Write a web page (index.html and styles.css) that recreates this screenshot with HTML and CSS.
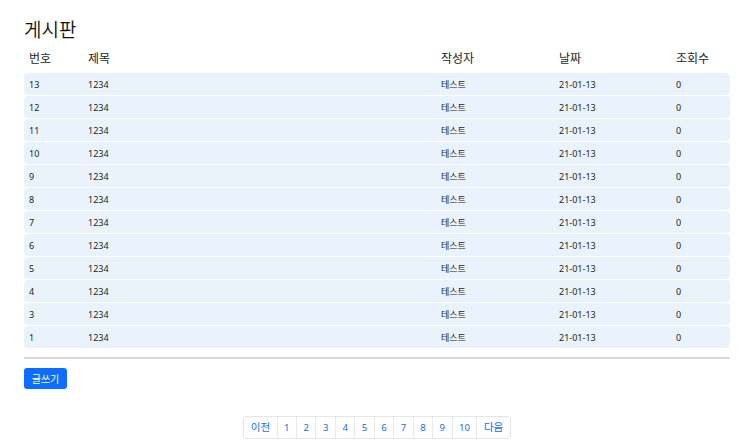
FILE: index.html
```html
<!DOCTYPE html>
<html lang="ko">
<head>
<meta charset="utf-8">
<title>게시판</title>
<link rel="stylesheet" href="styles.css">
</head>
<body>
<div class="page">
  <h1 class="title">게시판</h1>
  <div class="board">
    <div class="row head">
      <div>번호</div><div>제목</div><div>작성자</div><div>날짜</div><div>조회수</div>
    </div>
    <div class="row item"><div>13</div><div>1234</div><div>테스트</div><div>21-01-13</div><div>0</div></div>
    <div class="row item"><div>12</div><div>1234</div><div>테스트</div><div>21-01-13</div><div>0</div></div>
    <div class="row item"><div>11</div><div>1234</div><div>테스트</div><div>21-01-13</div><div>0</div></div>
    <div class="row item"><div>10</div><div>1234</div><div>테스트</div><div>21-01-13</div><div>0</div></div>
    <div class="row item"><div>9</div><div>1234</div><div>테스트</div><div>21-01-13</div><div>0</div></div>
    <div class="row item"><div>8</div><div>1234</div><div>테스트</div><div>21-01-13</div><div>0</div></div>
    <div class="row item"><div>7</div><div>1234</div><div>테스트</div><div>21-01-13</div><div>0</div></div>
    <div class="row item"><div>6</div><div>1234</div><div>테스트</div><div>21-01-13</div><div>0</div></div>
    <div class="row item"><div>5</div><div>1234</div><div>테스트</div><div>21-01-13</div><div>0</div></div>
    <div class="row item"><div>4</div><div>1234</div><div>테스트</div><div>21-01-13</div><div>0</div></div>
    <div class="row item"><div>3</div><div>1234</div><div>테스트</div><div>21-01-13</div><div>0</div></div>
    <div class="row item"><div>1</div><div>1234</div><div>테스트</div><div>21-01-13</div><div>0</div></div>
  </div>
  <hr class="divider">
  <button class="write-btn">글쓰기</button>
  <nav class="pager">
    <a class="pg">이전</a><a class="pg">1</a><a class="pg">2</a><a class="pg">3</a><a class="pg">4</a><a class="pg">5</a><a class="pg">6</a><a class="pg">7</a><a class="pg">8</a><a class="pg">9</a><a class="pg">10</a><a class="pg">다음</a>
  </nav>
</div>
</body>
</html>
```

FILE: styles.css
```css
* { box-sizing: border-box; }
html, body { margin: 0; padding: 0; background: #fff; }
body {
  font-family: "Noto Sans", "Noto Sans CJK KR", sans-serif;
  color: #212529;
}
.page {
  width: 750px;
  padding: 0 20px 0 24px;
}
.title {
  margin: 0;
  padding-top: 15px;
  height: 47px;
  font-size: 19px;
  font-weight: 350;
  color: #111;
  line-height: 30px;
}
.board {
  display: flex;
  flex-direction: column;
  gap: 1px;
}
.row {
  display: grid;
  grid-template-columns: 59px 353px 118px 117px 1fr;
  align-items: center;
}
.row > div { padding-left: 5px; white-space: nowrap; }
.head {
  height: 25px;
  font-size: 12px;
  line-height: 16px;
  padding-bottom: 1px;
}
.item {
  height: 22px;
  background: #eaf3fb;
  border-radius: 4px;
  font-size: 9px;
  line-height: 12px;
  padding-top: 1px;
}
.divider {
  margin: 9px 0 0 0;
  border: 0;
  height: 2px;
  background: #d9d9d9;
}
.write-btn {
  margin-top: 9px;
  display: block;
  width: 43px;
  height: 21px;
  padding: 0;
  border: 0;
  border-radius: 3px;
  background: #0d6efd;
  color: #fff;
  font-family: "Noto Sans CJK KR", sans-serif;
  font-size: 10px;
  line-height: 21px;
}
.pager {
  margin: 27px auto 0;
  display: flex;
  width: max-content;
  border: 1px solid #e3e6ea;
  border-radius: 3px;
}
.pg {
  display: block;
  height: 21px;
  padding: 0 6.5px;
  font-size: 9.5px;
  line-height: 21px;
  color: #0d6efd;
  border-left: 1px solid #e8ebee;
}
.pg:first-child { border-left: 0; font-size: 10.5px; }
.pg:last-child { font-size: 10.5px; }
```
